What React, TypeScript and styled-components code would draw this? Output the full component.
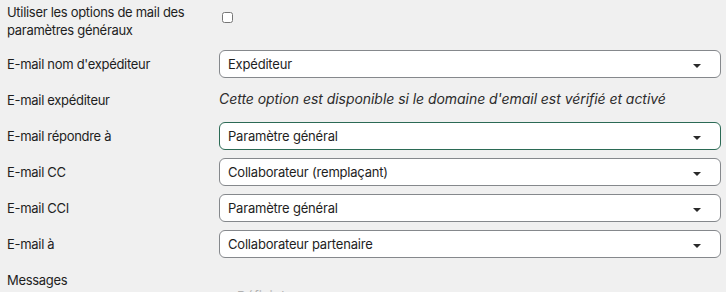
import React from "react";
import styled, { createGlobalStyle } from "styled-components";

const Global = createGlobalStyle`
  html, body { margin: 0; padding: 0; background: #f0f0f0; }
  body { font-family: Inter, "Noto Sans", sans-serif; color: #1e1e1e; overflow: hidden; }
`;

const Form = styled.div`
  width: 726px;
  height: 292px;
  box-sizing: border-box;
  padding: 0 5px 0 7px;
  display: flex;
  flex-direction: column;
  gap: 8px;
  overflow: hidden;
`;

const Row = styled.div<{ $h?: number }>`
  display: grid;
  grid-template-columns: 212px 1fr;
  align-items: start;
  min-height: ${(p) => p.$h ?? 28}px;
`;

const Label = styled.div<{ $top?: number }>`
  font-size: 13px;
  line-height: 18px;
  letter-spacing: -0.3px;
  padding-top: ${(p) => p.$top ?? 5}px;
  padding-right: 12px;
`;

const Check = styled.input`
  margin: 12px 0 0 3px;
  width: 11px;
  height: 11px;
`;

const Note = styled.div`
  font-size: 14px;
  line-height: 18px;
  letter-spacing: -0.05px;
  padding-top: 4px;
  font-style: italic;
  color: #2c2c2c;
`;

const SelectBox = styled.div<{ $focus?: boolean }>`
  height: 28px;
  box-sizing: border-box;
  border: 1px solid ${(p) => (p.$focus ? "#2b6a55" : "#85888c")};
  border-radius: 6px;
  background: #fff;
  display: flex;
  align-items: center;
  justify-content: space-between;
  padding: 0 19px 0 8px;
  font-size: 13px;
  letter-spacing: -0.2px;
  color: #1e1e1e;
`;

const Arrow = styled.span`
  width: 0;
  height: 0;
  border-left: 4px solid transparent;
  border-right: 4px solid transparent;
  border-top: 4px solid #2a2a2a;
  margin-top: 4px;
`;

const Faint = styled.div`
  font-size: 13px;
  line-height: 18px;
  padding: 21px 0 0 18px;
  color: #b0b0b0;
`;

const Select = ({ value, focus }: { value: string; focus?: boolean }) => (
  <SelectBox $focus={focus}>
    <span>{value}</span>
    <Arrow />
  </SelectBox>
);

export default function App() {
  return (
    <>
      <Global />
      <Form>
        <Row $h={42}>
          <Label $top={3}>Utiliser les options de mail des paramètres généraux</Label>
          <div>
            <Check type="checkbox" />
          </div>
        </Row>
        <Row>
          <Label>E-mail nom d'expéditeur</Label>
          <Select value="Expéditeur" />
        </Row>
        <Row>
          <Label>E-mail expéditeur</Label>
          <Note>Cette option est disponible si le domaine d'email est vérifié et activé</Note>
        </Row>
        <Row>
          <Label>E-mail répondre à</Label>
          <Select value="Paramètre général" focus />
        </Row>
        <Row>
          <Label>E-mail CC</Label>
          <Select value="Collaborateur (remplaçant)" />
        </Row>
        <Row>
          <Label>E-mail CCI</Label>
          <Select value="Paramètre général" />
        </Row>
        <Row>
          <Label>E-mail à</Label>
          <Select value="Collaborateur partenaire" />
        </Row>
        <Row>
          <Label>Messages</Label>
          <Faint>Définir les messages</Faint>
        </Row>
      </Form>
    </>
  );
}
